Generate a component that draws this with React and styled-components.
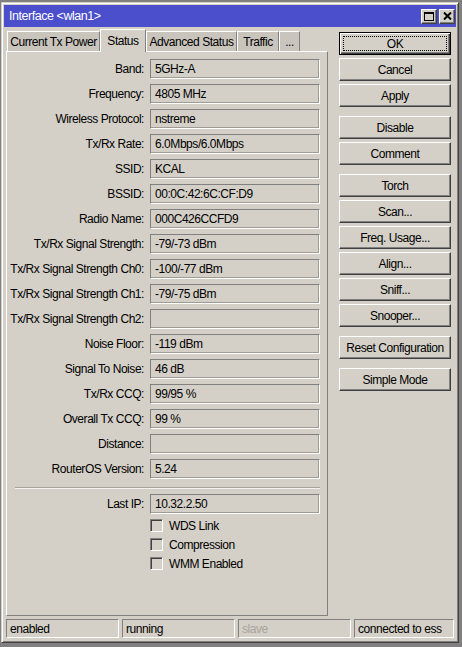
import React from 'react'
import styled, { createGlobalStyle } from 'styled-components'

const GlobalStyle = createGlobalStyle`
  html, body {
    margin: 0;
    padding: 0;
    background: #808080;
  }
  body {
    font-family: "Liberation Sans", Arial, sans-serif;
    font-size: 12px;
    letter-spacing: -0.45px;
    color: #000;
  }
`;

const Desk = styled.div`
  width: 462px;
  height: 647px;
  padding: 2px 0 0 1px;
  box-sizing: border-box;
`;

const Window = styled.div`
  width: 458px;
  height: 641px;
  box-sizing: border-box;
  background: #d4d0c8;
  border: 1px solid;
  border-color: #d4d0c8 #404040 #404040 #d4d0c8;
  box-shadow: inset 1px 1px #fff, inset -1px -1px #808080;
  padding: 2px;
  display: flex;
  flex-direction: column;
`;

const TitleBar = styled.div`
  height: 22px;
  flex: none;
  background: #4b4fcc;
  color: #fff;
  display: flex;
  align-items: center;
  justify-content: space-between;
  padding: 0 1px 0 5px;
`;

const TitleText = styled.span`
  font-size: 12.5px;
`;

const TitleButtons = styled.div`
  display: flex;
  gap: 2px;
`;

const TitleButton = styled.div`
  width: 16px;
  height: 15px;
  box-sizing: border-box;
  background: #d4d0c8;
  border: 1px solid;
  border-color: #fff #404040 #404040 #fff;
  box-shadow: inset -1px -1px #808080;
  display: flex;
  align-items: center;
  justify-content: center;
`;

const Body = styled.div`
  flex: 1;
  display: flex;
  flex-direction: column;
  padding: 0 2px 2px 2px;
`;

const Main = styled.div`
  flex: 1;
  display: flex;
`;

const LeftCol = styled.div`
  width: 322px;
  display: flex;
  flex-direction: column;
`;

const TabStrip = styled.div`
  height: 24px;
  flex: none;
  display: flex;
  align-items: flex-end;
  padding-left: 1px;
  position: relative;
  z-index: 1;
`;

const Tab = styled.div`
  width: ${p => p.$w}px;
  height: ${p => (p.$active ? 23 : 20)}px;
  margin-bottom: ${p => (p.$active ? -1 : 0)}px;
  box-sizing: border-box;
  background: ${p => (p.$active ? '#d4d0c8' : '#c9c5bd')};
  border-top: 1px solid #fff;
  border-left: 1px solid #fff;
  border-right: 1px solid #808080;
  display: flex;
  align-items: center;
  justify-content: center;
  padding-top: ${p => (p.$active ? 0 : 1)}px;
  white-space: nowrap;
`;

const Panel = styled.div`
  flex: 1;
  box-sizing: border-box;
  border: 1px solid;
  border-color: #fff #808080 #808080 #fff;
  padding-top: 7px;
  display: flex;
  flex-direction: column;
`;

const Row = styled.div`
  display: grid;
  grid-template-columns: 137px 170px;
  column-gap: 6px;
  align-items: center;
  height: 20px;
  margin-bottom: 5px;
`;

const Label = styled.div`
  text-align: right;
  white-space: nowrap;
`;

const Field = styled.div`
  height: 20px;
  box-sizing: border-box;
  border: 1px solid;
  border-color: #808080 #fff #fff #808080;
  box-shadow: inset -1px -1px #a09c94;
  padding-left: 4px;
  display: flex;
  align-items: center;
  white-space: nowrap;
  overflow: hidden;
`;

const Separator = styled.div`
  margin: 3px 7px 5px 8px;
  border-top: 1px solid #a8a49c;
  border-bottom: 1px solid #f4f2ee;
`;

const Checks = styled.div`
  margin-top: -3px;
  margin-left: 143px;
  display: flex;
  flex-direction: column;
`;

const Check = styled.label`
  display: flex;
  align-items: center;
  gap: 6px;
  height: 19px;
`;

const Box = styled.span`
  width: 13px;
  height: 13px;
  box-sizing: border-box;
  border: 1px solid;
  border-color: #808080 #fff #fff #808080;
  box-shadow: inset 1px 1px #404040, inset -1px -1px #d4d0c8;
  background: #d4d0c8;
`;

const Buttons = styled.div`
  width: 112px;
  margin-left: 11px;
  padding-top: 5px;
  display: flex;
  flex-direction: column;
  gap: 3px;
`;

const Button = styled.div`
  height: 23px;
  box-sizing: border-box;
  border: 1px solid;
  border-color: ${p => (p.$default ? '#000' : '#fff #404040 #404040 #fff')};
  box-shadow: ${p =>
    p.$default
      ? 'inset 1px 1px #fff, inset -1px -1px #404040, inset -2px -2px #808080'
      : 'inset -1px -1px #808080'};
  margin-top: ${p => (p.$spaced ? 6 : 0)}px;
  display: flex;
  align-items: center;
  justify-content: center;
  position: relative;
  white-space: nowrap;
`;

const Focus = styled.span`
  position: absolute;
  inset: 3px;
  border: 1px dotted #000;
`;

const StatusBar = styled.div`
  flex: none;
  margin-top: 3px;
  display: flex;
  gap: 3px;
`;

const StatusCell = styled.div`
  width: ${p => p.$w}px;
  height: 19px;
  box-sizing: border-box;
  border: 1px solid;
  border-color: #808080 #fff #fff #808080;
  padding-left: 3px;
  display: flex;
  align-items: center;
  color: ${p => (p.$dim ? '#a8a49c' : '#000')};
  white-space: nowrap;
`;

const fields = [
  ['Band', '5GHz-A'],
  ['Frequency', '4805 MHz'],
  ['Wireless Protocol', 'nstreme'],
  ['Tx/Rx Rate', '6.0Mbps/6.0Mbps'],
  ['SSID', 'KCAL'],
  ['BSSID', '00:0C:42:6C:CF:D9'],
  ['Radio Name', '000C426CCFD9'],
  ['Tx/Rx Signal Strength', '-79/-73 dBm'],
  ['Tx/Rx Signal Strength Ch0', '-100/-77 dBm'],
  ['Tx/Rx Signal Strength Ch1', '-79/-75 dBm'],
  ['Tx/Rx Signal Strength Ch2', ''],
  ['Noise Floor', '-119 dBm'],
  ['Signal To Noise', '46 dB'],
  ['Tx/Rx CCQ', '99/95 %'],
  ['Overall Tx CCQ', '99 %'],
  ['Distance', ''],
  ['RouterOS Version', '5.24'],
];

const tabs = [
  ['Current Tx Power', 93],
  ['Status', 46, true],
  ['Advanced Status', 91],
  ['Traffic', 42],
  ['...', 21],
];

const buttons = [
  ['OK', false, true],
  ['Cancel'],
  ['Apply'],
  ['Disable', true],
  ['Comment'],
  ['Torch', true],
  ['Scan...'],
  ['Freq. Usage...'],
  ['Align...'],
  ['Sniff...'],
  ['Snooper...'],
  ['Reset Configuration', true],
  ['Simple Mode', true],
];

const MaxIcon = () => (
  <svg width="10" height="9" viewBox="0 0 10 9">
    <rect x="0.5" y="0.5" width="9" height="8" fill="none" stroke="#000" />
    <rect x="0" y="0" width="10" height="2" fill="#000" />
  </svg>
);

const CloseIcon = () => (
  <svg width="9" height="8" viewBox="0 0 9 8">
    <path d="M1 0.5 L8 7.5 M8 0.5 L1 7.5" stroke="#000" strokeWidth="2" />
  </svg>
);

export default function App() {
  return (
    <Desk>
      <GlobalStyle />
      <Window>
        <TitleBar>
          <TitleText>Interface &lt;wlan1&gt;</TitleText>
          <TitleButtons>
            <TitleButton><MaxIcon /></TitleButton>
            <TitleButton><CloseIcon /></TitleButton>
          </TitleButtons>
        </TitleBar>
        <Body>
          <Main>
            <LeftCol>
              <TabStrip>
                {tabs.map(([name, w, active]) => (
                  <Tab key={name} $w={w} $active={active}>{name}</Tab>
                ))}
              </TabStrip>
              <Panel>
                {fields.map(([label, value]) => (
                  <Row key={label}>
                    <Label>{label}:</Label>
                    <Field>{value}</Field>
                  </Row>
                ))}
                <Separator />
                <Row>
                  <Label>Last IP:</Label>
                  <Field>10.32.2.50</Field>
                </Row>
                <Checks>
                  {['WDS Link', 'Compression', 'WMM Enabled'].map(name => (
                    <Check key={name}>
                      <Box />
                      {name}
                    </Check>
                  ))}
                </Checks>
              </Panel>
            </LeftCol>
            <Buttons>
              {buttons.map(([name, spaced, def]) => (
                <Button key={name} $spaced={spaced} $default={def}>
                  {def && <Focus />}
                  {name}
                </Button>
              ))}
            </Buttons>
          </Main>
          <StatusBar>
            <StatusCell $w={113}>enabled</StatusCell>
            <StatusCell $w={113}>running</StatusCell>
            <StatusCell $w={113} $dim>slave</StatusCell>
            <StatusCell $w={100}>connected to ess</StatusCell>
          </StatusBar>
        </Body>
      </Window>
    </Desk>
  );
}
